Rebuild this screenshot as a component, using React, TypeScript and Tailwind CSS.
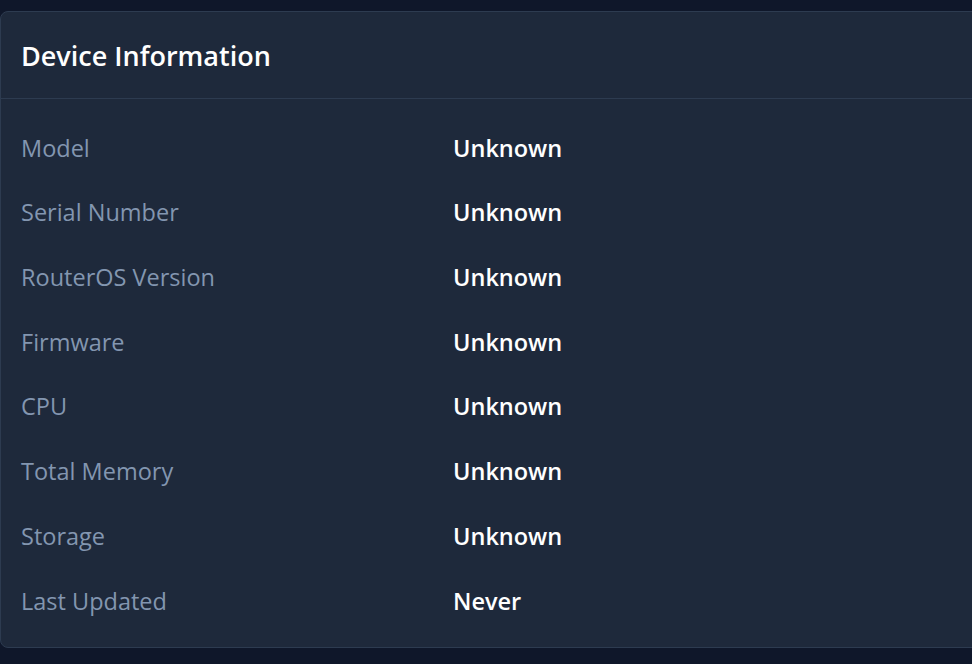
const rows = [
  { label: 'Model', value: 'Unknown' },
  { label: 'Serial Number', value: 'Unknown' },
  { label: 'RouterOS Version', value: 'Unknown' },
  { label: 'Firmware', value: 'Unknown' },
  { label: 'CPU', value: 'Unknown' },
  { label: 'Total Memory', value: 'Unknown' },
  { label: 'Storage', value: 'Unknown' },
  { label: 'Last Updated', value: 'Never' },
]

export default function App() {
  return (
    <div className="h-[664px] w-full overflow-hidden bg-[#0f172a] pt-[11px] font-['Open_Sans',sans-serif]">
      <div className="w-[1000px] rounded-lg border border-[#2d3b50] bg-[#1e293b]">
        {/* Header */}
        <div className="flex h-[87px] items-center border-b border-[#2d3b50] px-5 pt-[2px]">
          <h2 className="text-[27px] font-semibold text-white">Device Information</h2>
        </div>

        {/* Rows */}
        <div className="px-5 pt-[17px] pb-[13px]">
          {rows.map((r) => (
            <div key={r.label} className="flex h-[64.7px] items-center text-[23.5px]">
              <span className="w-[432px] text-[#8396b0]">{r.label}</span>
              <span className="font-semibold text-white">{r.value}</span>
            </div>
          ))}
        </div>
      </div>
    </div>
  )
}
